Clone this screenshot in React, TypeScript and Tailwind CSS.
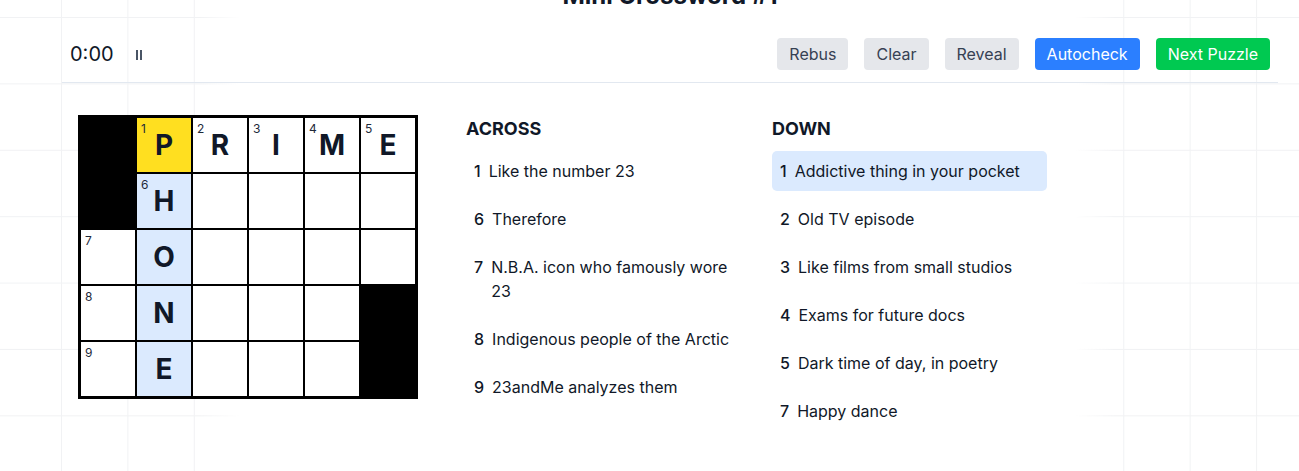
import React from "react";

type Cell = { black?: boolean; num?: number; letter?: string; hl?: "yellow" | "blue" };

const rows: Cell[][] = [
  [{ black: true }, { num: 1, letter: "P", hl: "yellow" }, { num: 2, letter: "R" }, { num: 3, letter: "I" }, { num: 4, letter: "M" }, { num: 5, letter: "E" }],
  [{ black: true }, { num: 6, letter: "H", hl: "blue" }, {}, {}, {}, {}],
  [{ num: 7 }, { letter: "O", hl: "blue" }, {}, {}, {}, {}],
  [{ num: 8 }, { letter: "N", hl: "blue" }, {}, {}, {}, { black: true }],
  [{ num: 9 }, { letter: "E", hl: "blue" }, {}, {}, {}, { black: true }],
];

const across: [number, string][] = [
  [1, "Like the number 23"],
  [6, "Therefore"],
  [7, "N.B.A. icon who famously wore 23"],
  [8, "Indigenous people of the Arctic"],
  [9, "23andMe analyzes them"],
];

const down: [number, string][] = [
  [1, "Addictive thing in your pocket"],
  [2, "Old TV episode"],
  [3, "Like films from small studios"],
  [4, "Exams for future docs"],
  [5, "Dark time of day, in poetry"],
  [7, "Happy dance"],
];

function ClueList({ title, items, active }: { title: string; items: [number, string][]; active?: number }) {
  return (
    <div className="w-[275px] shrink-0">
      <h2 className="text-lg leading-7 font-bold text-[#101828] mb-2">{title}</h2>
      <ul className="flex flex-col gap-2">
        {items.map(([n, t], i) => (
          <li
            key={n}
            className={
              "flex gap-2 rounded-[5px] px-2 py-2 text-base leading-6 text-[#101828] " +
              (i === active ? "bg-[#dbeafe]" : "")
            }
          >
            <span className="font-medium">{n}</span>
            <span>{t}</span>
          </li>
        ))}
      </ul>
    </div>
  );
}

export default function App() {
  return (
    <div className="relative min-h-screen overflow-hidden bg-white [font-family:Inter,'Noto_Sans',sans-serif]">
      <div
        className="absolute inset-0 bg-[linear-gradient(to_right,#f1f2f4_1px,transparent_1px),linear-gradient(to_bottom,#f1f2f4_1px,transparent_1px)] bg-[size:66.4px_66.4px] bg-[position:61px_17px] [mask-image:linear-gradient(to_right,black_0,black_200px,transparent_240px,transparent_1075px,black_1115px)]"
      />
      <div className="relative ml-[62px] w-[1216px] -mt-[20px]">
        <h1 className="text-center text-2xl leading-8 font-bold text-[#101828]">Mini Crossword #1</h1>
        <div className="mt-[14px] flex items-center justify-between border-b border-[#e2e8f0] px-2 py-3">
          <div className="flex items-center">
            <span className="text-xl leading-7 text-[#101828]">0:00</span>
            <span className="ml-[22px] mt-[2px] flex gap-[2px]">
              <span className="block h-[10px] w-[2px] bg-[#4a5565]" />
              <span className="block h-[10px] w-[2px] bg-[#4a5565]" />
            </span>
          </div>
          <div className="flex items-center gap-4">
            <button className="h-8 rounded px-3 text-base bg-[#e5e7eb] text-[#364153]">Rebus</button>
            <button className="h-8 rounded px-3 text-base bg-[#e5e7eb] text-[#364153]">Clear</button>
            <button className="h-8 rounded px-3 text-base bg-[#e5e7eb] text-[#364153]">Reveal</button>
            <button className="h-8 rounded px-3 text-base bg-[#2b7fff] text-white">Autocheck</button>
            <button className="h-8 rounded px-3 text-base bg-[#00c951] text-white">Next Puzzle</button>
          </div>
        </div>
        <div className="flex items-start gap-12 px-4 pt-8">
          <div className="grid grid-cols-[repeat(6,54px)] grid-rows-[repeat(5,54px)] gap-[2px] bg-black p-[3px] shrink-0">
            {rows.flatMap((r, ri) =>
              r.map((c, ci) => (
                <div
                  key={ri + "-" + ci}
                  className={
                    "relative flex items-center justify-center " +
                    (c.black ? "bg-black" : c.hl === "yellow" ? "bg-[#ffdf20]" : c.hl === "blue" ? "bg-[#dbeafe]" : "bg-white")
                  }
                >
                  {c.num !== undefined && (
                    <span className="absolute left-[4px] top-[5px] text-[12px] leading-none text-[#1e2939]">{c.num}</span>
                  )}
                  {c.letter && <span className="text-[28px] leading-none font-bold text-[#101828]">{c.letter}</span>}
                </div>
              ))
            )}
          </div>
          <div className="flex gap-[31px]">
            <ClueList title="ACROSS" items={across} />
            <ClueList title="DOWN" items={down} active={0} />
          </div>
        </div>
      </div>
    </div>
  );
}
